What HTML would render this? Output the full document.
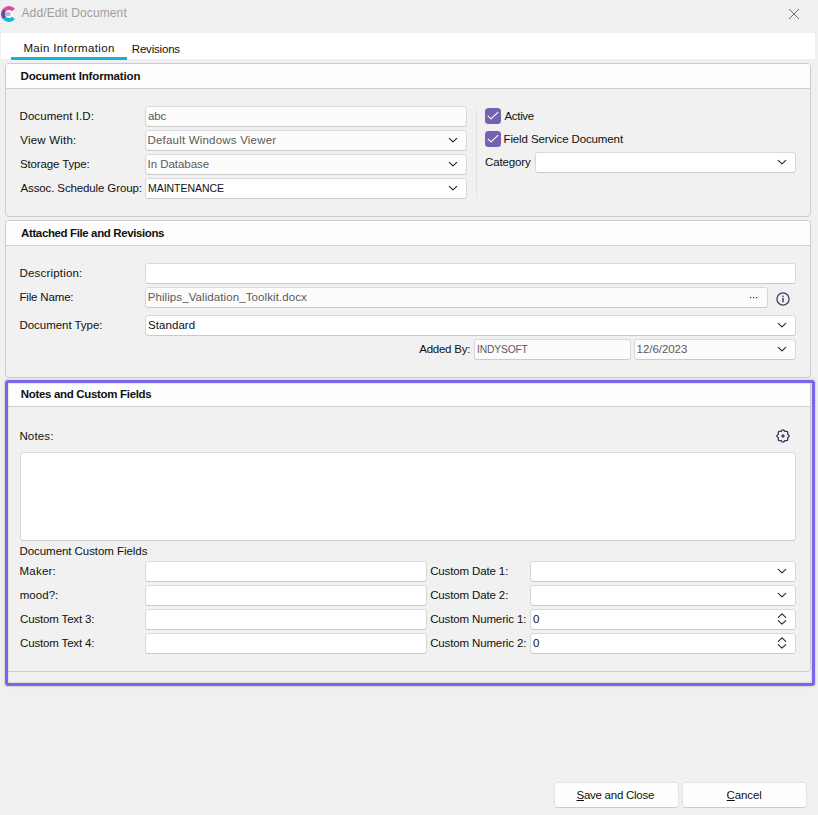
<!DOCTYPE html>
<html lang="en"><head><meta charset="utf-8"><title>Add/Edit Document</title>
<style>
html,body{margin:0;padding:0;background:#f0f0f0}
body{width:818px;height:815px;background:#f0f0f0;position:relative;overflow:hidden;font-family:"Liberation Sans",sans-serif;font-size:12px;color:#101010}
.t{position:absolute;white-space:nowrap;line-height:14px;height:14px;font-size:11.5px}
.t.b{font-weight:bold;color:#111}
.t.d{color:#5a5a5a}
.t.ttl{color:#9e9e9e}
.t u{text-decoration:underline;text-underline-offset:1px}
.g{position:absolute;left:5px;width:806px;box-sizing:border-box;border:1px solid #cbcbcb;border-radius:4px;background:#f1f1f1;overflow:hidden}
.gh{height:24px;border-bottom:1px solid #d0d0d0;background:#fdfdfd;box-shadow:inset 0 1px #fff,inset 0 -1px #fff}
.f{position:absolute;box-sizing:border-box;border:1px solid #d7d7d7;border-top-color:#dadada;border-bottom-color:#cbcbcb;border-radius:3.5px;background:#fff}
.f.ro{background:#fcfcfc}
.ic{position:absolute;display:block;overflow:visible}
.btn{position:absolute;box-sizing:border-box;border:1px solid #e4e4e4;border-bottom-color:#cdcdcd;border-radius:4px;background:#fefefe}
#strip{position:absolute;left:1px;top:33px;width:814px;height:26px;background:#fff}
#tabline{position:absolute;left:11px;top:57px;width:116px;height:3px;background:#0fb5d9}
#vsep{position:absolute;left:476px;top:106px;width:1px;height:93px;background:#e4e4e4}
#hl{position:absolute;left:5px;top:380px;width:810px;height:306px;box-sizing:border-box;border:3px solid #7a66ee;border-radius:3px;box-shadow:0 0 0 1px rgba(70,70,35,.065),0 0 4px rgba(0,0,0,.10),inset 0 0 0 1px rgba(70,70,35,.065),inset 0 0 3px rgba(0,0,0,.08)}
</style></head><body>

<svg class="ic" style="left:0;top:5px" width="18" height="18" viewBox="0 0 18 18"><circle cx="9" cy="9" r="4.4" fill="#fcfcfc"/><path d="M3.05 3.65 A8.0 8.0 0 0 1 14.95 3.65 L11.97 6.32 A4.0 4.0 0 0 0 6.03 6.32 Z" fill="#e3489f"/><path d="M3.05 14.35 A8.0 8.0 0 0 1 3.05 3.65 L6.03 6.32 A4.0 4.0 0 0 0 6.03 11.68 Z" fill="#6a47a6"/><path d="M14.95 14.35 A8.0 8.0 0 0 1 3.05 14.35 L6.03 11.68 A4.0 4.0 0 0 0 11.97 11.68 Z" fill="#10b9dc"/><ellipse cx="7.8" cy="9.1" rx="3.0" ry="2.0" fill="#b8b6bb"/></svg>
<svg class="ic" style="left:788px;top:8px" width="12" height="12" viewBox="0 0 12 12"><path d="M1 1 L11 11 M11 1 L1 11" stroke="#6f6f6f" stroke-width="1" fill="none"/></svg>
<div id="strip"></div><div id="tabline"></div>
<div class="g" style="top:63px;height:154px"><div class="gh"></div></div>
<div class="g" style="top:220px;height:158px"><div class="gh"></div></div>
<div class="g" style="top:381px;height:291px"><div class="gh"></div></div>
<div class="f ro" style="left:145px;top:106px;width:322px;height:21px"></div>
<div class="f ro" style="left:145px;top:130px;width:322px;height:21px"></div>
<div class="f ro" style="left:145px;top:154px;width:322px;height:21px"></div>
<div class="f " style="left:145px;top:178px;width:322px;height:21px"></div>
<svg class="ic" style="left:447px;top:134px" width="12" height="12" viewBox="0 0 12 12"><path d="M2.3 4.3 L6 7.8 L9.7 4.3" fill="none" stroke="#2a2a2a" stroke-width="1.15" stroke-linecap="round" stroke-linejoin="round"/></svg>
<svg class="ic" style="left:447px;top:158px" width="12" height="12" viewBox="0 0 12 12"><path d="M2.3 4.3 L6 7.8 L9.7 4.3" fill="none" stroke="#2a2a2a" stroke-width="1.15" stroke-linecap="round" stroke-linejoin="round"/></svg>
<svg class="ic" style="left:447px;top:182px" width="12" height="12" viewBox="0 0 12 12"><path d="M2.3 4.3 L6 7.8 L9.7 4.3" fill="none" stroke="#2a2a2a" stroke-width="1.15" stroke-linecap="round" stroke-linejoin="round"/></svg>
<div id="vsep"></div>
<svg class="ic" style="left:485px;top:108px" width="16" height="16" viewBox="0 0 16 16"><rect x="0" y="0" width="16" height="16" rx="3.5" fill="#7562ae"/><path d="M3.1 8.2 L6.0 10.9 L12.9 4.3" fill="none" stroke="#fff" stroke-width="1.15" stroke-linecap="round" stroke-linejoin="round"/></svg>
<svg class="ic" style="left:485px;top:131px" width="16" height="16" viewBox="0 0 16 16"><rect x="0" y="0" width="16" height="16" rx="3.5" fill="#7562ae"/><path d="M3.1 8.2 L6.0 10.9 L12.9 4.3" fill="none" stroke="#fff" stroke-width="1.15" stroke-linecap="round" stroke-linejoin="round"/></svg>
<div class="f " style="left:535px;top:152px;width:261px;height:21px"></div>
<svg class="ic" style="left:776px;top:156px" width="12" height="12" viewBox="0 0 12 12"><path d="M2.3 4.3 L6 7.8 L9.7 4.3" fill="none" stroke="#2a2a2a" stroke-width="1.15" stroke-linecap="round" stroke-linejoin="round"/></svg>
<div class="f " style="left:145px;top:263px;width:651px;height:21px"></div>
<div class="f ro" style="left:145px;top:287px;width:623px;height:21px"></div>
<div class="f " style="left:145px;top:315px;width:651px;height:21px"></div>
<svg class="ic" style="left:776px;top:319px" width="12" height="12" viewBox="0 0 12 12"><path d="M2.3 4.3 L6 7.8 L9.7 4.3" fill="none" stroke="#2a2a2a" stroke-width="1.15" stroke-linecap="round" stroke-linejoin="round"/></svg>
<div class="f ro" style="left:474px;top:339px;width:157px;height:21px"></div>
<div class="f ro" style="left:634px;top:339px;width:162px;height:21px"></div>
<svg class="ic" style="left:776px;top:343px" width="12" height="12" viewBox="0 0 12 12"><path d="M2.3 4.3 L6 7.8 L9.7 4.3" fill="none" stroke="#2a2a2a" stroke-width="1.15" stroke-linecap="round" stroke-linejoin="round"/></svg>
<svg class="ic" style="left:748px;top:295px" width="12" height="5" viewBox="0 0 12 5"><rect x="2" y="2" width="1.2" height="1.2" fill="#333"/><rect x="5" y="2" width="1.2" height="1.2" fill="#333"/><rect x="8" y="2" width="1.2" height="1.2" fill="#333"/></svg>
<svg class="ic" style="left:775px;top:291px" width="16" height="16" viewBox="0 0 16 16"><circle cx="8" cy="8" r="6.1" fill="none" stroke="#453c63" stroke-width="1.3"/><rect x="7.25" y="7" width="1.5" height="4.3" fill="#453c63"/><rect x="7.25" y="4.6" width="1.5" height="1.5" fill="#453c63"/></svg>
<div class="f " style="left:20px;top:452px;width:776px;height:89px"></div>
<div class="f " style="left:145px;top:561px;width:282px;height:21px"></div>
<div class="f " style="left:530px;top:561px;width:266px;height:21px"></div>
<div class="f " style="left:145px;top:585px;width:282px;height:21px"></div>
<div class="f " style="left:530px;top:585px;width:266px;height:21px"></div>
<div class="f " style="left:145px;top:609px;width:282px;height:21px"></div>
<div class="f " style="left:530px;top:609px;width:266px;height:21px"></div>
<div class="f " style="left:145px;top:633px;width:282px;height:21px"></div>
<div class="f " style="left:530px;top:633px;width:266px;height:21px"></div>
<svg class="ic" style="left:776px;top:565px" width="12" height="12" viewBox="0 0 12 12"><path d="M2.3 4.3 L6 7.8 L9.7 4.3" fill="none" stroke="#2a2a2a" stroke-width="1.15" stroke-linecap="round" stroke-linejoin="round"/></svg>
<svg class="ic" style="left:776px;top:589px" width="12" height="12" viewBox="0 0 12 12"><path d="M2.3 4.3 L6 7.8 L9.7 4.3" fill="none" stroke="#2a2a2a" stroke-width="1.15" stroke-linecap="round" stroke-linejoin="round"/></svg>
<svg class="ic" style="left:776px;top:611.1px" width="12" height="16" viewBox="0 0 12 16"><path d="M2.3 6.4 L6 2.9 L9.7 6.4 M2.3 9.6 L6 13.1 L9.7 9.6" fill="none" stroke="#2a2a2a" stroke-width="1.15" stroke-linecap="round" stroke-linejoin="round"/></svg>
<svg class="ic" style="left:776px;top:635.0px" width="12" height="16" viewBox="0 0 12 16"><path d="M2.3 6.4 L6 2.9 L9.7 6.4 M2.3 9.6 L6 13.1 L9.7 9.6" fill="none" stroke="#2a2a2a" stroke-width="1.15" stroke-linecap="round" stroke-linejoin="round"/></svg>
<svg class="ic" style="left:775px;top:428px" width="16" height="16" viewBox="0 0 16 16"><path d="M8.00 1.80 L8.59 2.00 L9.09 2.51 L9.50 3.05 L9.91 3.38 L10.44 3.44 L11.11 3.34 L11.82 3.34 L12.38 3.62 L12.66 4.18 L12.66 4.89 L12.56 5.56 L12.62 6.09 L12.95 6.50 L13.49 6.91 L14.00 7.41 L14.20 8.00 L14.00 8.59 L13.49 9.09 L12.95 9.50 L12.62 9.91 L12.56 10.44 L12.66 11.11 L12.66 11.82 L12.38 12.38 L11.82 12.66 L11.11 12.66 L10.44 12.56 L9.91 12.62 L9.50 12.95 L9.09 13.49 L8.59 14.00 L8.00 14.20 L7.41 14.00 L6.91 13.49 L6.50 12.95 L6.09 12.62 L5.56 12.56 L4.89 12.66 L4.18 12.66 L3.62 12.38 L3.34 11.82 L3.34 11.11 L3.44 10.44 L3.38 9.91 L3.05 9.50 L2.51 9.09 L2.00 8.59 L1.80 8.00 L2.00 7.41 L2.51 6.91 L3.05 6.50 L3.38 6.09 L3.44 5.56 L3.34 4.89 L3.34 4.18 L3.62 3.62 L4.18 3.34 L4.89 3.34 L5.56 3.44 L6.09 3.38 L6.50 3.05 L6.91 2.51 L7.41 2.00 L8.00 1.80 Z" fill="none" stroke="#3f3659" stroke-width="1.3" stroke-linejoin="round"/><circle cx="8" cy="8" r="1.7" fill="#4b4266"/></svg>
<div class="btn" style="left:554px;top:782px;width:125px;height:26px"></div>
<div class="btn" style="left:682px;top:782px;width:125px;height:26px"></div>
<div id="hl"></div>
<span id="title" class="t ttl" style="left:21.50px;top:6.00px;letter-spacing:0.116px;font-size:12px">Add/Edit Document</span>
<span id="tab1" class="t " style="left:23.40px;top:41.00px;letter-spacing:0.360px">Main Information</span>
<span id="tab2" class="t " style="left:131.80px;top:42.00px;letter-spacing:-0.194px">Revisions</span>
<span id="g1" class="t b" style="left:20.55px;top:69.00px;letter-spacing:-0.147px">Document Information</span>
<span id="l1" class="t " style="left:19.50px;top:109.00px;letter-spacing:0.075px">Document I.D:</span>
<span id="l2" class="t " style="left:20.25px;top:133.00px;letter-spacing:0.206px">View With:</span>
<span id="l3" class="t " style="left:20.00px;top:157.00px;letter-spacing:-0.137px">Storage Type:</span>
<span id="l4" class="t " style="left:20.50px;top:181.00px;letter-spacing:-0.124px">Assoc. Schedule Group:</span>
<span id="v1" class="t d" style="left:148.00px;top:109.00px;letter-spacing:-0.100px">abc</span>
<span id="v2" class="t d" style="left:147.50px;top:133.00px;letter-spacing:0.198px">Default Windows Viewer</span>
<span id="v3" class="t d" style="left:147.50px;top:157.00px;letter-spacing:-0.040px">In Database</span>
<span id="v4" class="t " style="left:147.50px;top:181.00px;letter-spacing:-0.011px;transform:scaleX(0.91);transform-origin:0 0">MAINTENANCE</span>
<span id="c1" class="t " style="left:504.50px;top:109.00px;letter-spacing:-0.330px">Active</span>
<span id="c2" class="t " style="left:503.50px;top:132.00px;letter-spacing:-0.119px">Field Service Document</span>
<span id="c3" class="t " style="left:485.10px;top:155.00px;letter-spacing:-0.150px">Category</span>
<span id="g2" class="t b" style="left:21.05px;top:226.00px;letter-spacing:-0.381px">Attached File and Revisions</span>
<span id="l5" class="t " style="left:19.50px;top:266.00px;letter-spacing:0.191px">Description:</span>
<span id="l6" class="t " style="left:19.50px;top:290.00px;letter-spacing:-0.172px">File Name:</span>
<span id="l7" class="t " style="left:19.50px;top:318.00px;letter-spacing:-0.046px">Document Type:</span>
<span id="v5" class="t d" style="left:147.70px;top:290.00px;letter-spacing:0.090px">Philips_Validation_Toolkit.docx</span>
<span id="v6" class="t " style="left:148.00px;top:318.00px;letter-spacing:0.071px">Standard</span>
<span id="l8" class="t " style="left:419.20px;top:342.00px;letter-spacing:-0.231px">Added By:</span>
<span id="v7" class="t d" style="left:476.60px;top:342.00px;letter-spacing:-0.144px;transform:scaleX(0.89);transform-origin:0 0">INDYSOFT</span>
<span id="v8" class="t d" style="left:636.60px;top:342.00px;letter-spacing:-0.056px">12/6/2023</span>
<span id="g3" class="t b" style="left:20.85px;top:387.00px;letter-spacing:-0.327px">Notes and Custom Fields</span>
<span id="l9" class="t " style="left:19.40px;top:429.00px;letter-spacing:0.150px">Notes:</span>
<span id="l10" class="t " style="left:19.50px;top:544.00px;letter-spacing:-0.057px">Document Custom Fields</span>
<span id="l11" class="t " style="left:19.50px;top:564.00px;letter-spacing:0.230px">Maker:</span>
<span id="l12" class="t " style="left:19.75px;top:588.00px;letter-spacing:0.030px">mood?:</span>
<span id="l13" class="t " style="left:20.00px;top:612.00px;letter-spacing:-0.154px">Custom Text 3:</span>
<span id="l14" class="t " style="left:20.00px;top:636.00px;letter-spacing:-0.154px">Custom Text 4:</span>
<span id="r1" class="t " style="left:430.20px;top:564.00px;letter-spacing:-0.135px">Custom Date 1:</span>
<span id="r2" class="t " style="left:430.20px;top:588.00px;letter-spacing:-0.135px">Custom Date 2:</span>
<span id="r3" class="t " style="left:430.20px;top:612.00px;letter-spacing:-0.141px">Custom Numeric 1:</span>
<span id="r4" class="t " style="left:430.20px;top:636.00px;letter-spacing:-0.141px">Custom Numeric 2:</span>
<span id="n1" class="t " style="left:532.90px;top:612.00px;letter-spacing:0.000px">0</span>
<span id="n2" class="t " style="left:532.90px;top:636.00px;letter-spacing:0.000px">0</span>
<span id="b1" class="t " style="left:576.50px;top:788.00px;letter-spacing:-0.262px"><u>S</u>ave and Close</span>
<span id="b2" class="t " style="left:726.60px;top:788.00px;letter-spacing:-0.110px"><u>C</u>ancel</span>
</body></html>
